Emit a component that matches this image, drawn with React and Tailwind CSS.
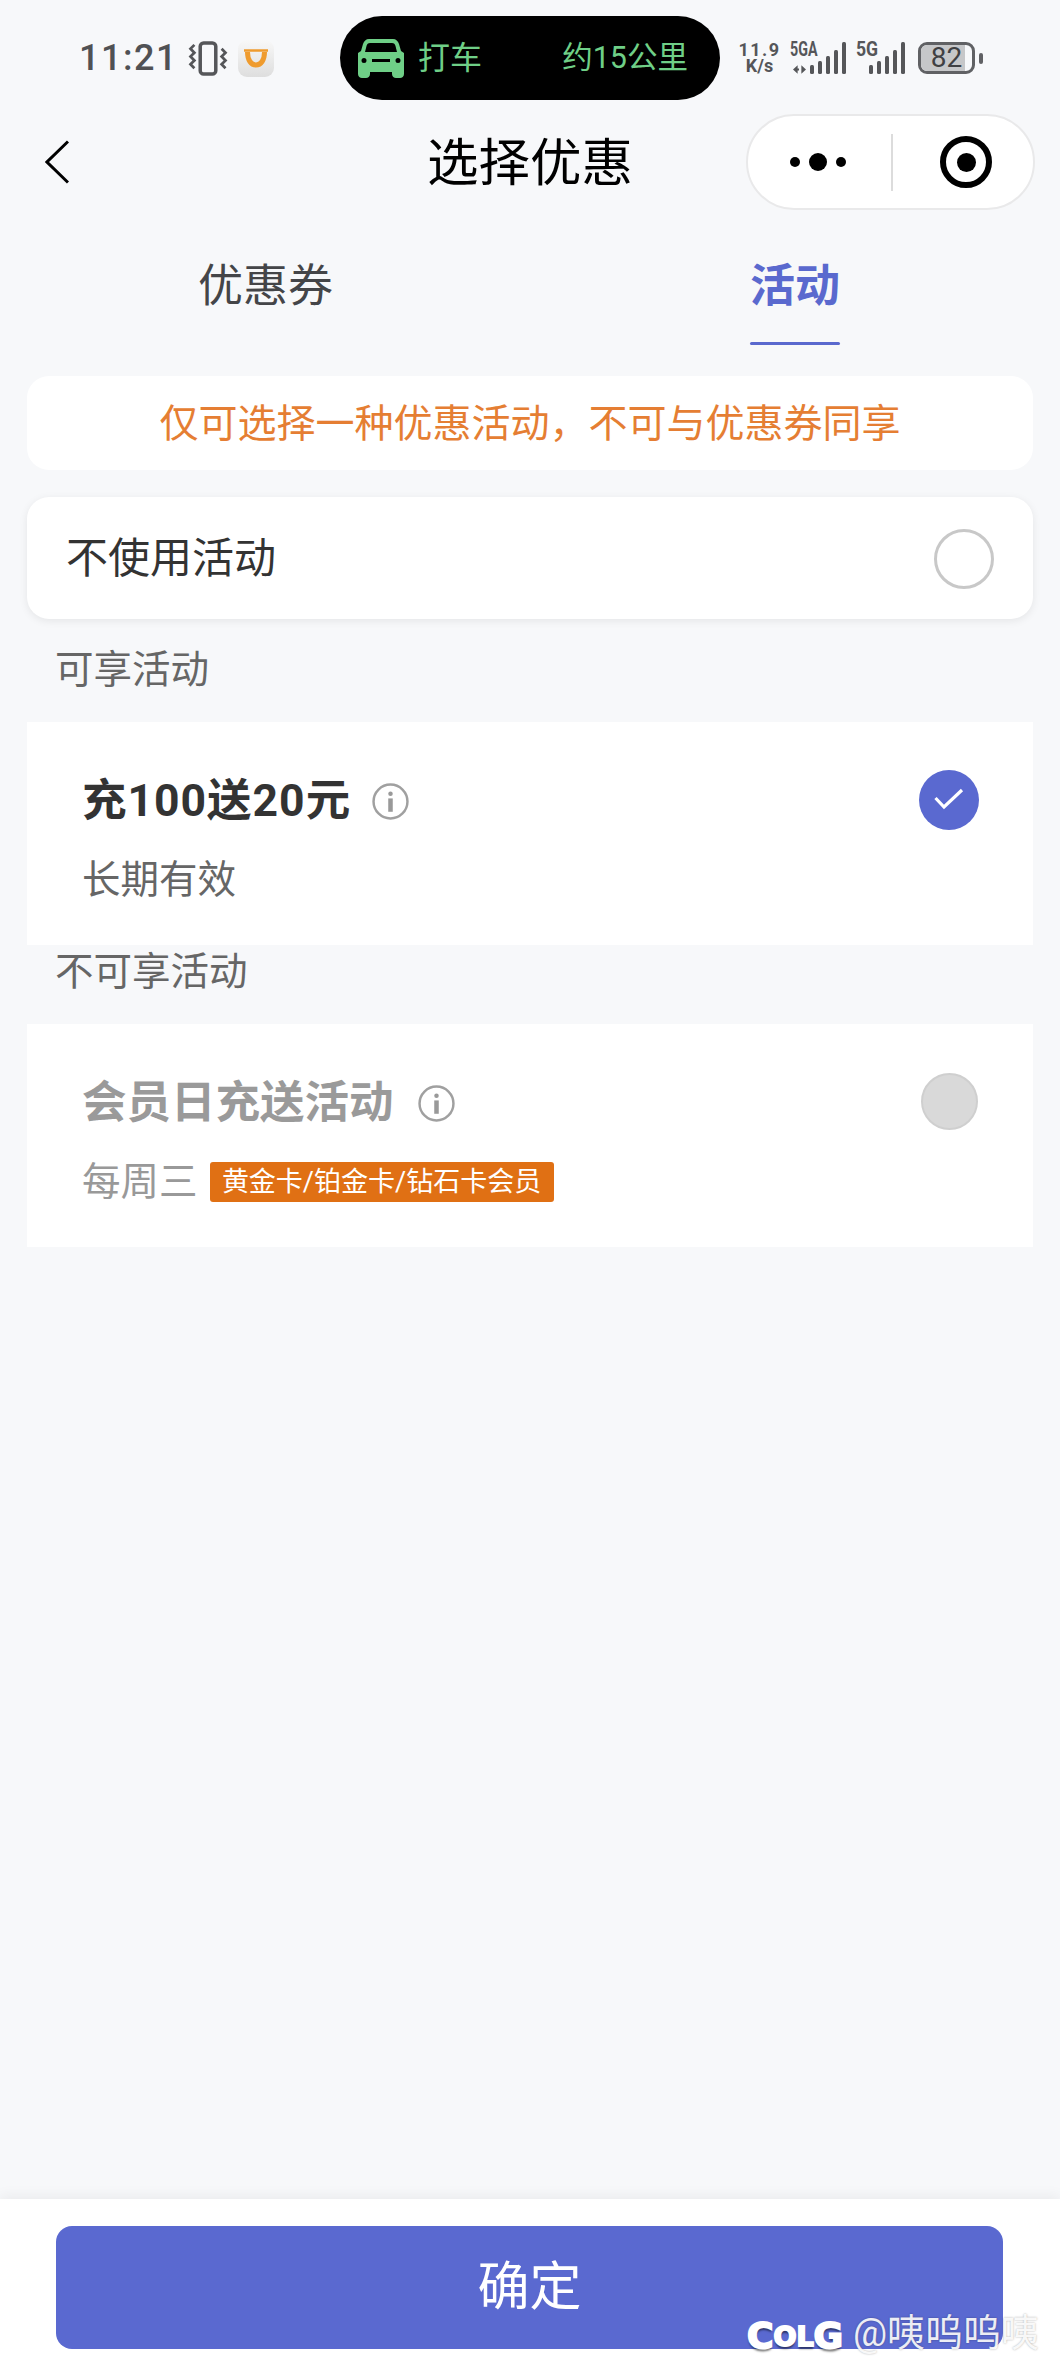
import React from "react";

const cjk = '"Roboto", "Noto Sans CJK SC", sans-serif';

const SignalBars = ({ heights }) => (
  <div className="flex items-end gap-[3.5px]">
    {heights.map((h, i) => (
      <div key={i} className="w-[4.5px] rounded-[1.5px] bg-[#555659]" style={{ height: h }} />
    ))}
  </div>
);

const InfoIcon = ({ className }) => (
  <svg viewBox="0 0 36 36" className={className} fill="none">
    <circle cx="18" cy="18" r="16.5" stroke="#a0a0a0" strokeWidth="2.4" />
    <circle cx="18" cy="10.5" r="2.2" fill="#999" />
    <rect x="15.8" y="15" width="4.4" height="13" fill="#999" />
  </svg>
);

const StatusBar = () => (
  <div className="flex h-[100px] items-center pt-[16px]">
    <span className="ml-[79px] w-[97px] text-[36px] font-medium leading-none tracking-[1.5px] text-[#505154]">11:21</span>
    <svg viewBox="0 0 40 36" className="ml-[12px] h-[35px] w-[40px]" fill="none" stroke="#555659">
      <rect x="12" y="2" width="16" height="32" rx="3.5" strokeWidth="3.6" />
      <path d="M6 4 2 8 6 12 2 16 6 20 2 24 6 28 M34 8 38 12 34 16 38 20 34 24 38 28" strokeWidth="2.8" />
    </svg>
    <div className="ml-[10px] flex h-[37px] w-[36px] items-center justify-center rounded-[9px] bg-gradient-to-b from-[#f8f8f8] to-[#dedede]">
      <svg viewBox="0 0 26 20" className="h-[20px] w-[26px]" fill="none">
        <path d="M1 2.500H25" stroke="#ef9b2e" strokeWidth="2.500" />
        <path d="M4.500 4C4.500 12 8 17 13 17 18 17 21.500 12 21.500 4" stroke="#ef9b2e" strokeWidth="5" />
      </svg>
    </div>
    <div className="ml-[66px] flex h-[84px] w-[380px] shrink-0 items-center rounded-full bg-black pl-[18px] text-[#6fcf87]">
      <svg viewBox="0 0 46 40" className="h-[40px] w-[46px]" fill="#6fcf87">
        <path d="M11 1H35C38 1 40 3 41 6L43 13 46 15V36C46 38.500 44 40 42 40H38C36 40 34 38.500 34 36V34H12V36C12 38.500 10 40 8 40H4C2 40 0 38.500 0 36V15L3 13 5 6C6 3 8 1 11 1ZM12 5C10 5 9 6 8.500 8L7 14H39L37.500 8C37 6 36 5 34 5ZM14 21V24H32V21ZM6 20A2.500 2.500 0 1 0 6 25 2.500 2.500 0 1 0 6 20ZM40 20A2.500 2.500 0 1 0 40 25 2.500 2.500 0 1 0 40 20Z" fillRule="evenodd" />
      </svg>
      <span className="ml-[14px] text-[32px] leading-none">打车</span>
      <span className="ml-auto mr-[32px] text-[30.500px] leading-none">约15公里</span>
    </div>
    <div className="ml-[17px] flex w-[45px] flex-col items-center text-[#555659]">
      <span className="whitespace-nowrap text-[18px] font-bold leading-[16px] tracking-[1.5px]">11.9</span>
      <span className="text-[18px] font-bold leading-[16px]">K/s</span>
    </div>
    <div className="relative ml-[8px] flex h-[32px] w-[56px] items-end justify-end">
      <span className="absolute left-0 top-0 origin-left scale-x-[0.68] text-[21px] font-bold leading-[15px] text-[#555659]">5GA</span>
      <svg viewBox="0 0 14 9" className="absolute bottom-0 left-[3px] h-[9px] w-[13px]" fill="#555659">
        <path d="M0 4.500 5 0V3.500H6.500V5.500H5V9ZM14 4.500 9 0V9Z" />
      </svg>
      <SignalBars heights={[9, 13, 18, 24, 32]} />
    </div>
    <div className="relative ml-[10px] flex h-[32px] w-[49px] items-end justify-end">
      <span className="absolute left-0 top-0 origin-left scale-x-[0.84] text-[21px] font-bold leading-[15px] text-[#555659]">5G</span>
      <SignalBars heights={[9, 13, 18, 24, 32]} />
    </div>
    <div className="relative ml-[13px] flex h-[32px] w-[57px] items-center justify-center overflow-hidden rounded-[9px] border-[3px] border-[#606164]">
      <div className="absolute inset-y-0 left-0 w-[44px] bg-[#c6c7c9]" />
      <span className="relative text-[28px] leading-none text-[#3f4043]">82</span>
    </div>
    <div className="ml-[4px] h-[11px] w-[4px] rounded-full bg-[#606164]" />
  </div>
);

const NavBar = () => (
  <div className="mt-[14px] flex h-[96px] items-center">
    <svg viewBox="0 0 24 44" className="ml-[45px] h-[44px] w-[24px]" fill="none" stroke="#000" strokeWidth="3">
      <path d="M23 1.500 2 22 23 42.500" />
    </svg>
    <h1 className="ml-[357px] w-[208px] pt-[3px] text-center text-[51.500px] font-normal leading-none text-black">选择优惠</h1>
    <div className="ml-[112px] flex h-[96px] w-[289px] items-center rounded-full border-2 border-[#e9e9ea] bg-white">
      <div className="ml-[42px] flex w-[56px] items-center justify-between">
        <div className="size-[10px] rounded-full bg-black" />
        <div className="size-[18px] rounded-full bg-black" />
        <div className="size-[10px] rounded-full bg-black" />
      </div>
      <div className="ml-[45px] h-[57px] w-[2px] bg-[#dcdcdc]" />
      <div className="ml-[47px] flex size-[52px] items-center justify-center rounded-full border-[6px] border-black">
        <div className="size-[19px] rounded-full bg-black" />
      </div>
    </div>
  </div>
);

const Tabs = () => (
  <div className="flex h-[166px] items-start pt-[48px]">
    <div className="ml-[198px] w-[136px] whitespace-nowrap text-[45px] leading-[58px] text-[#444548]">优惠券</div>
    <div className="ml-[416px] flex w-[90px] flex-col items-center">
      <span className="text-[45px] font-bold leading-[58px] text-[#5a69ce]">活动</span>
      <div className="mt-[26px] h-[3px] w-[90px] rounded-full bg-[#5a69ce]" />
    </div>
  </div>
);

const ActivityCard = ({ title, disabled, sub, tag, titleClass, infoGap }) => (
  <div className="mx-[27px] flex h-[223px] bg-white">
    <div className="ml-[55px] flex-1 pt-[51px]">
      <div className="flex h-[56px] items-center">
        <span className={`text-[44.500px] font-bold leading-none ${titleClass} ${disabled ? "text-[#9a9a9a]" : "text-[#333333]"}`}>{title}</span>
        <InfoIcon className={`${infoGap} size-[37px]`} />
      </div>
      <div className="mt-[28px] flex h-[46px] items-center">
        <span className={`text-[38.500px] leading-none ${disabled ? "text-[#999999]" : "text-[#666666]"}`}>{sub}</span>
        {tag && (
          <span className="ml-[12px] flex h-[40px] w-[344px] items-center justify-center rounded-[3px] bg-[#e07014] text-[27px] leading-none text-white">
            {tag}
          </span>
        )}
      </div>
    </div>
    {disabled ? (
      <div className="mr-[55px] mt-[49px] size-[57px] rounded-full border-2 border-[#cfcfcf] bg-[#d9d9d9]" />
    ) : (
      <div className="mr-[54px] mt-[48px] flex size-[60px] items-center justify-center rounded-full bg-[#5a69d0]">
        <svg viewBox="0 0 30 24" className="h-[24px] w-[30px]" fill="none" stroke="#fff" strokeWidth="3.2">
          <path d="M1.500 10 10 19 28 2" />
        </svg>
      </div>
    )}
  </div>
);

export default function App() {
  return (
    <div className="relative flex h-[2376px] w-[1060px] flex-col overflow-hidden bg-[#f7f8fa]" style={{ fontFamily: cjk }}>
      <StatusBar />
      <NavBar />
      <Tabs />

      <div className="mx-[27px] flex h-[94px] items-center justify-center rounded-[22px] bg-white pt-[2px] text-[39px] leading-none text-[#e57e33]">
        仅可选择一种优惠活动，不可与优惠券同享
      </div>

      <div className="mx-[27px] mt-[27px] flex h-[122px] items-center justify-between rounded-[22px] bg-white pl-[39px] pr-[39px] pt-[2px] shadow-[0_2px_8px_rgba(0,0,0,0.08)]">
        <span className="text-[42px] leading-none text-[#333333]">不使用活动</span>
        <div className="size-[60px] rounded-full border-[3px] border-[#c8c8c8]" />
      </div>

      <div className="ml-[55px] flex h-[103px] items-center text-[38.500px] leading-none text-[#666666]">可享活动</div>
      <ActivityCard title="充100送20元" sub="长期有效" titleClass="tracking-[1px]" infoGap="ml-[21px]" />

      <div className="ml-[55px] flex h-[79px] items-center pb-[25px] text-[38.500px] leading-none text-[#666666]">不可享活动</div>
      <ActivityCard title="会员日充送活动" sub="每周三" tag="黄金卡/铂金卡/钻石卡会员" titleClass="" disabled infoGap="ml-[24px]" />

      <div className="mt-auto flex h-[177px] bg-white pl-[56px] pt-[27px] shadow-[0_-4px_12px_rgba(0,0,0,0.05)]">
        <button className="h-[123px] w-[947px] rounded-[16px] bg-[#5a69d0] text-[52px] leading-none text-white">确定</button>
      </div>

      <div className="absolute left-[747px] top-[2313px] flex h-[40px] items-center">
        <span
          className="mt-[6px] flex w-[98px] items-center text-[36px] font-bold leading-none text-white [-webkit-text-stroke:2px_white] [text-shadow:0_3px_2px_rgba(0,0,0,0.5)]"
          style={{ fontFamily: '"DejaVu Sans", sans-serif' }}
        >
          C<span className="text-[27px]">O</span><span className="text-[27px]">L</span>G
        </span>
        <span className="ml-[8px] text-[38px] leading-none text-white/90 [text-shadow:0_0_2px_rgba(0,0,0,0.35)]">@咦呜呜咦</span>
      </div>
    </div>
  );
}
